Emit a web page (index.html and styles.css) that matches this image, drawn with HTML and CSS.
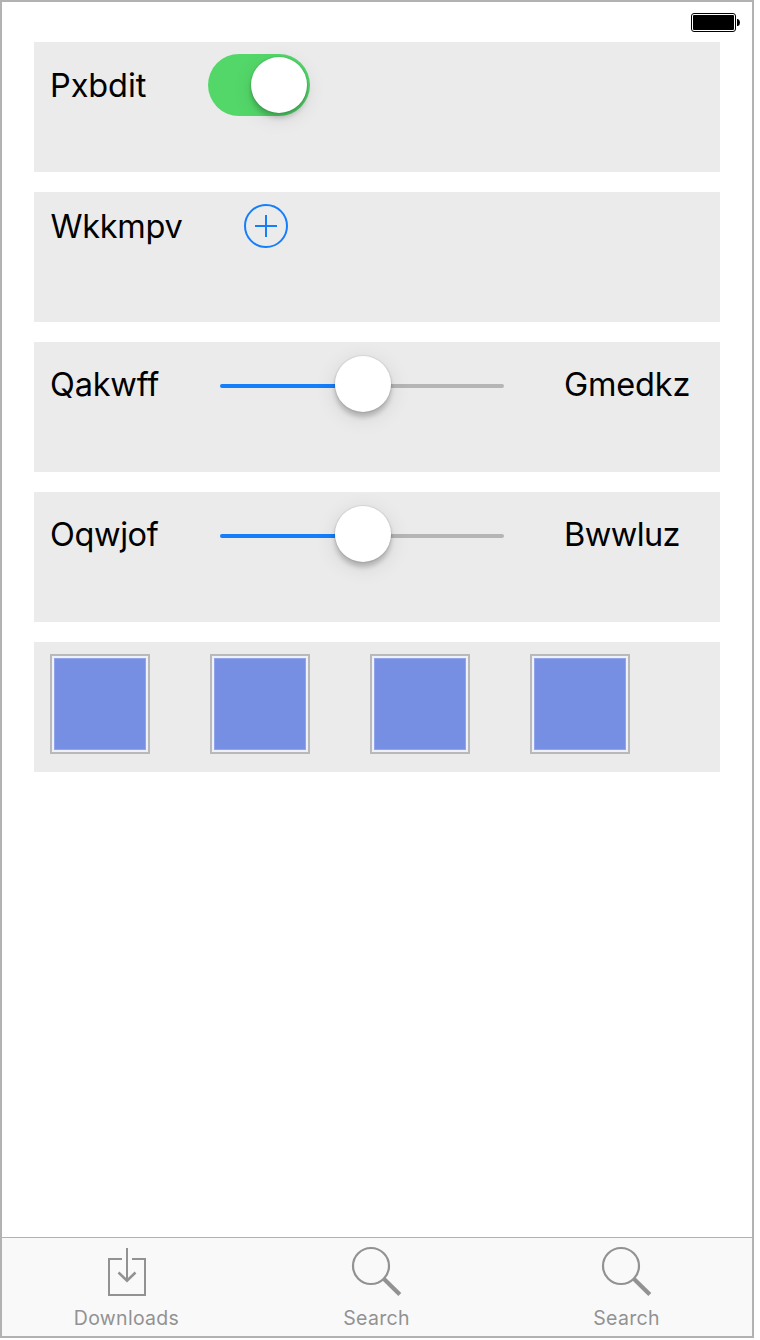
FILE: index.html
```html
<!DOCTYPE html>
<html lang="en">
<head>
<meta charset="utf-8">
<title>Controls</title>
<link rel="stylesheet" href="styles.css">
</head>
<body>
<div class="screen">
  <header class="status">
    <svg class="battery" width="50" height="20" viewBox="0 0 50 20">
      <rect x="0.5" y="0.5" width="44" height="18" rx="2.5" fill="#fff" stroke="#000"/>
      <rect x="2" y="2" width="41" height="15" rx="1" fill="#000"/>
      <path d="M46 6h1q2 1 2 3.500t-2 3.500h-1z" fill="#000"/>
    </svg>
  </header>
  <main class="cards">
    <section class="card">
      <div class="row row-switch">
        <span class="label label-switch">Pxbdit</span>
        <div class="switch"><div class="knob"></div></div>
      </div>
    </section>
    <section class="card">
      <div class="row row-add">
        <span class="label label-add">Wkkmpv</span>
        <svg width="44" height="44" viewBox="0 0 44 44" fill="none" stroke="#157efb" stroke-width="2">
          <circle cx="22" cy="22" r="21"/>
          <path d="M11 22h22M22 11v22"/>
        </svg>
      </div>
    </section>
    <section class="card">
      <div class="row row-slider">
        <span class="label label-slider">Qakwff</span>
        <div class="slider"><div class="fill"></div><div class="thumb"></div><div class="rest"></div></div>
        <span class="label">Gmedkz</span>
      </div>
    </section>
    <section class="card">
      <div class="row row-slider">
        <span class="label label-slider label-snug">Oqwjof</span>
        <div class="slider"><div class="fill"></div><div class="thumb"></div><div class="rest"></div></div>
        <span class="label label-tight">Bwwluz</span>
      </div>
    </section>
    <section class="card">
      <div class="row">
        <div class="tile"></div><div class="tile"></div><div class="tile"></div><div class="tile"></div>
      </div>
    </section>
  </main>
  <nav class="tabs">
    <div class="tab">
      <svg width="60" height="60" viewBox="0 0 60 60" fill="none" stroke="#929292" stroke-width="2">
        <path d="M25 21H12v36h36V21H35M30 10v32"/>
        <path d="M21.500 34.500l8.500 8.200 8.500-8.200" stroke-width="2.500"/>
      </svg>
      <span class="tab-label">Downloads</span>
    </div>
    <div class="tab">
      <svg width="60" height="60" viewBox="0 0 60 60" fill="none" stroke="#929292">
        <circle cx="24" cy="28" r="18" stroke-width="2.200"/>
        <path d="M37 41l15.800 15.500" stroke-width="4.200"/>
      </svg>
      <span class="tab-label">Search</span>
    </div>
    <div class="tab">
      <svg width="60" height="60" viewBox="0 0 60 60" fill="none" stroke="#929292">
        <circle cx="24" cy="28" r="18" stroke-width="2.200"/>
        <path d="M37 41l15.800 15.500" stroke-width="4.200"/>
      </svg>
      <span class="tab-label">Search</span>
    </div>
  </nav>
</div>
</body>
</html>
```
FILE: styles.css
```css
*, *::before { box-sizing: border-box; }
body { margin: 0; background: #fff; font-family: Inter, "Liberation Sans", sans-serif; }
svg { display: block; flex: none; }
.screen { width: 754px; height: 1338px; border: 2px solid #b2b2b2; display: flex; flex-direction: column; }
.status { height: 40px; padding: 11px 11px 0 0; display: flex; justify-content: flex-end; }
.cards { flex: 1; padding: 0 32px; display: flex; flex-direction: column; gap: 20px; }
.card { height: 130px; background: #ebebeb; padding: 12px 16px; }
.row { display: flex; align-items: center; gap: 60px; }
.row-switch { height: 62px; }
.row-add { height: 44px; }
.row-slider { height: 60px; }
.label { font-size: 32.5px; line-height: 40px; color: #000; white-space: nowrap; letter-spacing: -0.2px; padding-top: 1px; }
.label-switch { width: 98px; letter-spacing: -0.1px; }
.label-add { width: 134px; letter-spacing: -0.3px; padding-left: 0.5px; }
.label-slider { width: 110px; }
.label-snug { letter-spacing: -0.4px; }
.label-tight { letter-spacing: -0.6px; }
.switch { width: 102px; height: 62px; border-radius: 31px; background: #53d769; padding: 3px; display: flex; justify-content: flex-end; }
.knob { width: 56px; height: 56px; border-radius: 50%; background: #fff; box-shadow: 0 0 1px 1px rgba(0,0,0,.07), 0 5px 5px rgba(0,0,0,.18), 0 5px 20px rgba(0,0,0,.1); }
.slider { width: 284px; display: flex; align-items: center; }
.fill { width: 115px; height: 4px; margin-top: 4px; background: #157efb; border-radius: 2px 0 0 2px; }
.rest { flex: 1; height: 4px; margin-top: 4px; background: #b5b5b5; border-radius: 0 2px 2px 0; }
.thumb { position: relative; width: 56px; height: 56px; border-radius: 50%; background: #fff; box-shadow: 0 0 1px 1px rgba(0,0,0,.07), 0 5px 5px rgba(0,0,0,.2), 0 5px 22px rgba(0,0,0,.11); }
.tile { width: 100px; height: 100px; border: 2px solid #b9b9b9; background: #eef1fb; padding: 2px; }
.tile::before { content: ""; display: block; height: 92px; background: #768fe3; border: 1px solid #91a5e8; }
.tabs { height: 99px; border-top: 1px solid #b2b2b2; background: #f9f9f9; display: flex; }
.tab { flex: 1; display: flex; flex-direction: column; align-items: center; }
.tab-label { font-size: 19.5px; line-height: 24px; margin-top: 8px; color: #929292; letter-spacing: 0.3px; padding-right: 1px; }
```
